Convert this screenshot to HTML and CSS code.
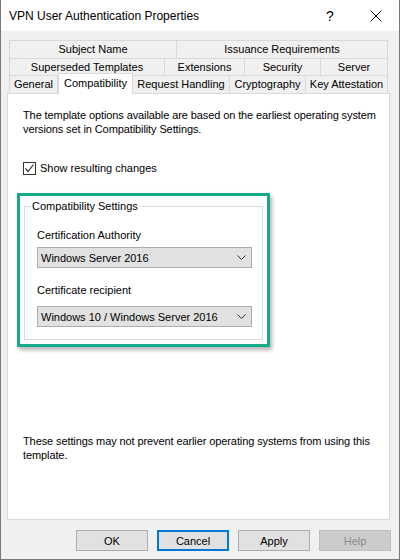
FILE: index.html
```html
<!DOCTYPE html>
<html lang="en">
<head>
  <meta charset="UTF-8" />
  <title>VPN User Authentication Properties</title>
  <link rel="stylesheet" href="styles.css">
</head>
<body>
  <div class="window">
    <div class="titlebar">
      <span class="title">VPN User Authentication Properties</span>
      <span class="title-btn help">?</span>
      <span class="title-btn close">
        <svg width="12" height="12" viewBox="0 0 12 12" aria-hidden="true">
          <path d="M0.5 0.5 L11.5 11.5 M11.5 0.5 L0.5 11.5" stroke="#000" stroke-width="1" fill="none" />
        </svg>
      </span>
    </div>

    <div class="dialog">
      <div class="tabs">
        <div class="tab-row">
          <div class="tab" style="width:168px">Subject Name</div>
          <div class="tab" style="width:211px">Issuance Requirements</div>
        </div>
        <div class="tab-row middle">
          <div class="tab" style="width:156px">Superseded Templates</div>
          <div class="tab" style="width:80px">Extensions</div>
          <div class="tab" style="width:76px">Security</div>
          <div class="tab" style="width:67px">Server</div>
        </div>
        <div class="tab-row">
          <div class="tab" style="width:49px">General</div>
          <div class="tab active" style="width:75px">Compatibility</div>
          <div class="tab" style="width:97px">Request Handling</div>
          <div class="tab" style="width:76px">Cryptography</div>
          <div class="tab" style="width:82px">Key Attestation</div>
        </div>
      </div>

      <div class="panel">
        <p class="intro">The template options available are based on the earliest operating system versions set in Compatibility Settings.</p>

        <div class="check-row">
          <span class="checkbox">
            <svg width="11" height="11" viewBox="0 0 11 11" aria-hidden="true">
              <path d="M1.5 5.5 L4 8.5 L9.5 1.5" stroke="#333" stroke-width="1.2" fill="none" />
            </svg>
          </span>
          <span>Show resulting changes</span>
        </div>

        <div class="highlight">
          <fieldset class="group">
            <legend>Compatibility Settings</legend>
            <div class="field-label">Certification Authority</div>
            <div class="select">
              <span>Windows Server 2016</span>
              <svg class="chevron" width="9" height="5" viewBox="0 0 9 5" aria-hidden="true">
                <path d="M0.5 0.5 L4.5 4.5 L8.5 0.5" stroke="#333" stroke-width="1" fill="none" />
              </svg>
            </div>
            <div class="field-label second">Certificate recipient</div>
            <div class="select second">
              <span>Windows 10 / Windows Server 2016</span>
              <svg class="chevron" width="9" height="5" viewBox="0 0 9 5" aria-hidden="true">
                <path d="M0.5 0.5 L4.5 4.5 L8.5 0.5" stroke="#333" stroke-width="1" fill="none" />
              </svg>
            </div>
          </fieldset>
        </div>

        <p class="note">These settings may not prevent earlier operating systems from using this template.</p>
      </div>

      <div class="buttons">
        <div class="btn">OK</div>
        <div class="btn default">Cancel</div>
        <div class="btn">Apply</div>
        <div class="btn disabled">Help</div>
      </div>
    </div>
  </div>
</body>
</html>
```

FILE: styles.css
```css
html, body {
  margin: 0;
  padding: 0;
}
body {
  font-family: "Liberation Sans", Arial, sans-serif;
  font-size: 11px;
  color: #000;
}
.window {
  width: 400px;
  height: 560px;
  box-sizing: border-box;
  border: 1px solid #7a7a7a;
  border-top: none;
  background: #f0f0f0;
  display: flex;
  flex-direction: column;
}
.titlebar {
  height: 31px;
  flex: none;
  background: #fff;
  display: flex;
  align-items: center;
  padding-left: 8px;
}
.title {
  flex: 1;
  font-size: 12px;
}
.title-btn {
  width: 46px;
  height: 31px;
  display: flex;
  align-items: center;
  justify-content: center;
}
.title-btn.help {
  font-size: 14px;
}
.dialog {
  flex: 1;
  display: flex;
  flex-direction: column;
  padding: 9px 8px 0 6px;
}
.tabs {
  margin-left: 2px;
  width: 379px;
}
.tab-row {
  display: flex;
  align-items: flex-start;
  height: 18px;
}
.tab-row.middle {
  height: 17px;
}
.tab {
  box-sizing: border-box;
  height: 18px;
  line-height: 17px;
  text-align: center;
  white-space: nowrap;
  border-top: 1px solid #d9d9d9;
  border-right: 1px solid #d9d9d9;
}
.tab-row.middle .tab {
  height: 17px;
  line-height: 16px;
}
.tab:first-child {
  border-left: 1px solid #d9d9d9;
}
.tab.active {
  background: #fff;
  height: 21px;
  line-height: 18px;
  margin-top: -2px;
  border-left: 1px solid #d9d9d9;
  position: relative;
  z-index: 1;
}
.panel {
  width: 383px;
  height: 427px;
  box-sizing: border-box;
  background: #fff;
  border: 1px solid #d9d9d9;
  padding: 14px 4px 0 15px;
  display: flex;
  flex-direction: column;
}
.intro, .note {
  margin: 0;
  line-height: 14px;
  letter-spacing: -0.1px;
}
.note {
  margin-top: 87px;
}
.check-row {
  display: flex;
  align-items: center;
  gap: 4px;
  margin-top: 25px;
  height: 14px;
}
.checkbox {
  width: 13px;
  height: 13px;
  box-sizing: border-box;
  border: 1px solid #333;
  background: #fff;
  display: flex;
  align-items: center;
  justify-content: center;
}
.highlight {
  width: 253px;
  height: 154px;
  box-sizing: border-box;
  margin: 18px 0 0 -6px;
  border: 3px solid #16a98a;
  padding: 3px 4px 4px 4px;
  box-shadow: 2px 3px 4px rgba(0, 0, 0, 0.3);
}
.group {
  margin: 0;
  height: 141px;
  box-sizing: border-box;
  border: 1px solid #dcdcdc;
  padding: 0 0 0 12px;
  min-width: 0;
}
.group legend {
  padding: 0 1px;
  margin-left: -6px;
  line-height: 14px;
}
.field-label {
  line-height: 14px;
  margin-top: 15px;
}
.select {
  width: 215px;
  height: 21px;
  box-sizing: border-box;
  margin-top: 5px;
  border: 1px solid #adadad;
  background: #e1e1e1;
  display: flex;
  align-items: center;
  justify-content: space-between;
  padding: 0 5px 0 3px;
}
.select.second {
  margin-top: 9px;
}
.buttons {
  display: flex;
  justify-content: flex-end;
  gap: 9px;
  margin-top: 10px;
}
.btn {
  width: 72px;
  height: 21px;
  box-sizing: border-box;
  border: 1px solid #adadad;
  background: #e1e1e1;
  display: flex;
  align-items: center;
  justify-content: center;
}
.btn.default {
  border: 2px solid #0078d7;
}
.btn.disabled {
  background: #cccccc;
  border-color: #bfbfbf;
  color: #8a8a8a;
}
```
